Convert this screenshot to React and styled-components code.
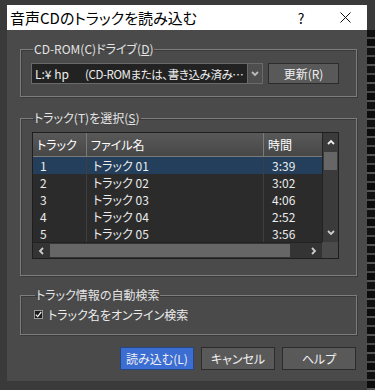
import React from 'react';
import styled, { createGlobalStyle } from 'styled-components';

const GlobalStyle = createGlobalStyle`
  html, body { margin: 0; padding: 0; }
  body {
    width: 375px;
    height: 390px;
    overflow: hidden;
    background: #3a3a3a;
    font-family: "Noto Sans CJK JP", "Noto Sans", sans-serif;
    font-feature-settings: "palt";
  }
  * { box-sizing: border-box; }
`;

const Screen = styled.div`
  display: flex;
  align-items: flex-start;
  height: 390px;
  padding: 5px 0 0 7px;
`;

const Backdrop = styled.div`
  flex: 1;
  align-self: stretch;
  margin-top: 25px;
  background: repeating-linear-gradient(180deg, #111 0 7px, #4a4a4a 7px 9px, #0c0c0c 9px 16px, #555 16px 18px);
`;

const Dialog = styled.div`
  width: 360px;
  height: 376px;
  background: #4a4a4a;
  display: flex;
  flex-direction: column;
`;

const TitleBar = styled.div`
  height: 25px;
  background: #fff;
  display: flex;
  align-items: center;
  padding-left: 3px;
  color: #000;
`;

const Title = styled.div`
  flex: 1;
  font-size: 15px;
  line-height: 25px;
`;

const TitleBtn = styled.div`
  width: 44px;
  height: 25px;
  display: flex;
  align-items: center;
  justify-content: center;
  font-size: 14px;
`;

const Body = styled.div`
  padding: 12px 10px 0 13px;
  display: flex;
  flex-direction: column;
`;

const Group = styled.fieldset`
  margin: 0 0 ${p => p.$gap || 0}px;
  min-width: 0;
  border: 1px solid #7d7d7d;
  box-shadow: inset 1px 1px 0 #3a3a3a, 1px 1px 0 #3a3a3a;
  padding: ${p => p.$pad};
`;

const Legend = styled.legend`
  padding: 0 1px;
  margin-left: 1px;
  font-size: 12px;
  line-height: 14px;
  color: #e4e4e4;
`;

const DriveRow = styled.div`
  display: flex;
  gap: 5px;
  margin-left: -1px;
`;

const Select = styled.div`
  width: 232px;
  height: 21px;
  display: flex;
  background: #222;
  border: 1px solid #6a6a6a;
  color: #eee;
  font-size: 12px;
`;

const SelectText = styled.div`
  flex: 1;
  display: flex;
  align-items: center;
  padding-left: 3px;
  white-space: nowrap;
  overflow: hidden;
`;

const DriveName = styled.span`
  display: inline-block;
  flex: none;
  width: 50px;
`;

const DriveDesc = styled.span`
  font-size: 11.5px;
  letter-spacing: -0.4px;
`;

const SelectArrow = styled.div`
  width: 15px;
  background: #4e4e4e;
  border-left: 1px solid #6a6a6a;
  display: flex;
  align-items: center;
  justify-content: center;
`;

const Button = styled.div`
  width: ${p => p.$w || 74}px;
  height: ${p => p.$h || 23}px;
  display: flex;
  align-items: center;
  justify-content: center;
  background: ${p => (p.$primary ? '#3b6dd3' : '#595959')};
  border: 1px solid ${p => (p.$primary ? '#26467f' : '#2c2c2c')};
  color: #f0f0f0;
  font-size: 12px;
`;

const ListBox = styled.div`
  display: grid;
  grid-template-columns: 289px 16px;
  grid-template-rows: 109px 16px;
  border: 1px solid #1e1e1e;
  background: #2b2b2b;
`;

const Table = styled.div`
  display: flex;
  flex-direction: column;
  overflow: hidden;
`;

const cols = '54px 177px 1fr';

const HeadRow = styled.div`
  display: grid;
  grid-template-columns: ${cols};
  height: 24px;
  background: linear-gradient(#595959, #474747);
  border-bottom: 1px solid #7a7a7a;
`;

const HeadCell = styled.div`
  display: flex;
  align-items: center;
  padding-left: 4px;
  color: #fff;
  font-size: 12px;
  border-right: ${p => (p.$last ? 'none' : '1px solid #7a7a7a')};
`;

const Row = styled.div`
  display: grid;
  grid-template-columns: ${cols};
  height: 17px;
  background: ${p => (p.$selected ? '#233f5b' : 'transparent')};
`;

const Cell = styled.div`
  display: flex;
  align-items: center;
  padding-left: ${p => p.$pl}px;
  color: #ececec;
  font-size: 12px;
  border-right: ${p => (p.$last ? 'none' : '1px solid #3e3e3e')};
`;

const VScroll = styled.div`
  display: flex;
  flex-direction: column;
  background: #3b3b3b;
  border-left: 1px solid #222;
`;

const ScrollBtn = styled.div`
  height: ${p => p.$h}px;
  display: flex;
  align-items: center;
  justify-content: center;
`;

const VThumb = styled.div`
  height: 18px;
  margin: 0 1px;
  background: #666;
`;

const Spacer = styled.div`
  flex: 1;
`;

const HScroll = styled.div`
  display: flex;
  align-items: stretch;
  background: #343434;
  border-top: 1px solid #222;
`;

const HBtn = styled.div`
  width: 17px;
  display: flex;
  align-items: center;
  justify-content: center;
`;

const HThumb = styled.div`
  width: 240px;
  margin: 1px 0;
  background: #666;
`;

const Corner = styled.div`
  background: #4a4a4a;
`;

const CheckRow = styled.label`
  display: flex;
  align-items: center;
  gap: 5px;
  color: #ececec;
  font-size: 12px;
  height: 15px;
`;

const Box = styled.span`
  width: 9px;
  height: 9px;
  background: #1b1b1b;
  border: 1px solid #9a9a9a;
  display: flex;
  align-items: center;
  justify-content: center;
`;

const Footer = styled.div`
  display: flex;
  justify-content: flex-end;
  gap: 7px;
  padding-right: 1px;
  margin-top: 12px;
`;

const Chevron = ({ dir = 'down', color = '#ddd' }) => {
  const pts = {
    down: '1,2 4,5 7,2',
    up: '1,5 4,2 7,5',
    left: '5,1 2,4 5,7',
    right: '2,1 5,4 2,7',
  }[dir];
  return (
    <svg width="8" height="8" viewBox="0 0 8 8">
      <polyline points={pts} fill="none" stroke={color} strokeWidth="1.8" />
    </svg>
  );
};

const tracks = [
  ['1', 'トラック 01', '3:39'],
  ['2', 'トラック 02', '3:02'],
  ['3', 'トラック 03', '4:06'],
  ['4', 'トラック 04', '2:52'],
  ['5', 'トラック 05', '3:56'],
];

export default function App() {
  return (
    <>
      <GlobalStyle />
      <Screen>
        <Dialog>
          <TitleBar>
            <Title>音声CDのトラックを読み込む</Title>
            <TitleBtn>?</TitleBtn>
            <TitleBtn>
              <svg width="11" height="11" viewBox="0 0 11 11">
                <path d="M0.5 0.5 L10.5 10.5 M10.5 0.5 L0.5 10.5" stroke="#111" strokeWidth="1" />
              </svg>
            </TitleBtn>
          </TitleBar>
          <Body>
            <Group $pad="7px 17px 12px 11px" $gap={14}>
              <Legend>CD-ROM(C)ドライブ(<u>D</u>)</Legend>
              <DriveRow>
                <Select>
                  <SelectText>
                    <DriveName>L:¥ hp</DriveName>
                    <DriveDesc>(CD-ROMまたは、書き込み済み…</DriveDesc>
                  </SelectText>
                  <SelectArrow>
                    <Chevron dir="down" color="#bbb" />
                  </SelectArrow>
                </Select>
                <Button $w={71} $h={21}>更新(R)</Button>
              </DriveRow>
            </Group>

            <Group $pad="7px 17px 16px 11px" $gap={12}>
              <Legend>トラック(T)を選択(<u>S</u>)</Legend>
              <ListBox>
                <Table>
                  <HeadRow>
                    <HeadCell>トラック</HeadCell>
                    <HeadCell>ファイル名</HeadCell>
                    <HeadCell $last>時間</HeadCell>
                  </HeadRow>
                  {tracks.map((t, i) => (
                    <Row key={t[0]} $selected={i === 0}>
                      <Cell $pl={7}>{t[0]}</Cell>
                      <Cell $pl={6}>{t[1]}</Cell>
                      <Cell $pl={8} $last>{t[2]}</Cell>
                    </Row>
                  ))}
                </Table>
                <VScroll>
                  <ScrollBtn $h={19}><Chevron dir="up" color="#eee" /></ScrollBtn>
                  <VThumb />
                  <Spacer />
                  <ScrollBtn $h={18}><Chevron dir="down" color="#ccc" /></ScrollBtn>
                </VScroll>
                <HScroll>
                  <HBtn><Chevron dir="left" color="#ccc" /></HBtn>
                  <HThumb />
                  <Spacer />
                  <HBtn><Chevron dir="right" color="#ccc" /></HBtn>
                </HScroll>
                <Corner />
              </ListBox>
            </Group>

            <Group $pad="5px 17px 12px 13px">
              <Legend>トラック情報の自動検索</Legend>
              <CheckRow>
                <Box>
                  <svg width="7" height="7" viewBox="0 0 7 7">
                    <polyline points="0.8,3.6 2.7,5.6 6.2,1" fill="none" stroke="#eee" strokeWidth="1.3" />
                  </svg>
                </Box>
                トラック名をオンライン検索
              </CheckRow>
            </Group>

            <Footer>
              <Button $primary>読み込む(L)</Button>
              <Button>キャンセル</Button>
              <Button>ヘルプ</Button>
            </Footer>
          </Body>
        </Dialog>
        <Backdrop />
      </Screen>
    </>
  );
}
